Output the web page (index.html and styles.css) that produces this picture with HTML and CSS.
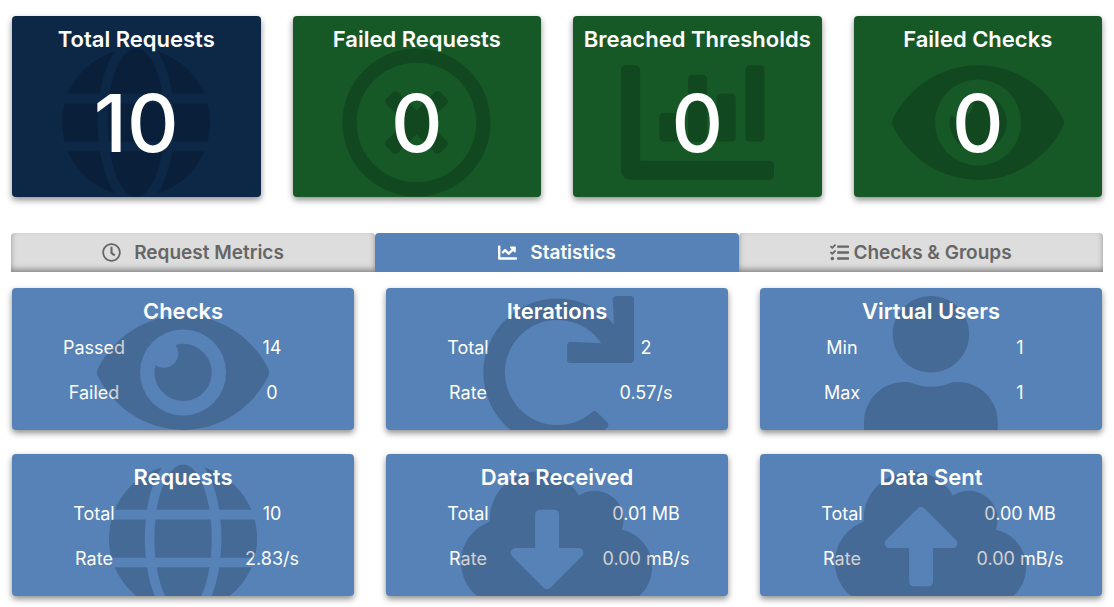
FILE: index.html
```html
<!DOCTYPE html>
<html lang="en">
<head>
<meta charset="utf-8">
<meta name="viewport" content="width=device-width, initial-scale=1">
<title>Load Test Report</title>
<link rel="stylesheet" href="styles.css">
</head>
<body>
<svg class="sprite" aria-hidden="true">
  <symbol id="globe" viewBox="0 0 496 512"><path d="M336.5 160C322 70.7 287.8 8 248 8s-74 62.7-88.5 152h177zM152 256c0 22.2 1.2 43.5 3.3 64h185.3c2.1-20.5 3.3-41.8 3.3-64s-1.2-43.5-3.3-64H155.3c-2.1 20.5-3.3 41.8-3.3 64zm324.7-96c-28.6-67.9-86.5-120.4-158-141.6 24.4 33.8 41.2 84.7 50 141.6h108zM177.2 18.4C105.8 39.6 47.8 92.1 19.3 160h108c8.7-56.9 25.5-107.8 49.9-141.6zM487.4 192H372.7c2.1 21 3.3 42.5 3.3 64s-1.2 43-3.3 64h114.6c5.5-20.5 8.6-41.8 8.6-64s-3.1-43.5-8.5-64zM120 256c0-21.5 1.2-43 3.3-64H8.6C3.2 212.5 0 233.8 0 256s3.2 43.5 8.6 64h114.6c-2-21-3.2-42.5-3.2-64zm39.5 96c14.5 89.3 48.7 152 88.5 152s74-62.7 88.5-152h-177zm159.3 141.6c71.4-21.2 129.4-73.7 158-141.6h-108c-8.8 56.9-25.6 107.8-50 141.6zM19.3 352c28.6 67.9 86.5 120.4 158 141.6-24.4-33.8-41.2-84.7-50-141.6h-108z"/></symbol>
  <symbol id="times-circle" viewBox="0 0 512 512"><path d="M256 8C119 8 8 119 8 256s111 248 248 248 248-111 248-248S393 8 256 8zm0 448c-110.5 0-200-89.5-200-200S145.5 56 256 56s200 89.5 200 200-89.5 200-200 200zm101.8-262.2L295.6 256l62.2 62.2c4.7 4.7 4.7 12.3 0 17l-22.6 22.6c-4.7 4.7-12.3 4.7-17 0L256 295.6l-62.2 62.2c-4.7 4.7-12.3 4.7-17 0l-22.6-22.6c-4.7-4.7-4.7-12.3 0-17l62.2-62.2-62.2-62.2c-4.7-4.7-4.7-12.3 0-17l22.6-22.6c4.7-4.7 12.3-4.7 17 0l62.2 62.2 62.2-62.2c4.7-4.7 12.3-4.7 17 0l22.6 22.6c4.7 4.7 4.7 12.3 0 17z"/></symbol>
  <symbol id="chart-bar" viewBox="0 0 512 512"><path d="M332.8 320h38.4c6.4 0 12.8-6.4 12.8-12.8V172.8c0-6.4-6.4-12.8-12.8-12.8h-38.4c-6.4 0-12.8 6.4-12.8 12.8v134.4c0 6.4 6.4 12.8 12.8 12.8zm96 0h38.4c6.4 0 12.8-6.4 12.8-12.8V76.8c0-6.4-6.4-12.8-12.8-12.8h-38.4c-6.4 0-12.8 6.4-12.8 12.8v230.4c0 6.4 6.4 12.8 12.8 12.8zm-288 0h38.4c6.4 0 12.8-6.4 12.8-12.8v-70.4c0-6.4-6.4-12.8-12.8-12.8h-38.4c-6.4 0-12.8 6.4-12.8 12.8v70.4c0 6.4 6.4 12.8 12.8 12.8zm96 0h38.4c6.4 0 12.8-6.4 12.8-12.8V108.8c0-6.4-6.4-12.8-12.8-12.8h-38.4c-6.4 0-12.8 6.4-12.8 12.8v198.4c0 6.4 6.4 12.8 12.8 12.8zM496 384H64V80c0-8.84-7.16-16-16-16H16C7.16 64 0 71.16 0 80v336c0 17.67 14.33 32 32 32h464c8.84 0 16-7.16 16-16v-32c0-8.84-7.16-16-16-16z"/></symbol>
  <symbol id="eye" viewBox="0 0 576 512"><path d="M572.52 241.4C518.29 135.59 410.93 64 288 64S57.68 135.64 3.48 241.41a32.35 32.35 0 0 0 0 29.19C57.71 376.41 165.07 448 288 448s230.32-71.64 284.52-177.41a32.35 32.35 0 0 0 0-29.19zM288 400a144 144 0 1 1 144-144 143.93 143.93 0 0 1-144 144zm0-240a95.31 95.31 0 0 0-25.31 3.79 47.85 47.85 0 0 1-66.9 66.9A95.78 95.78 0 1 0 288 160z"/></symbol>
  <symbol id="redo" viewBox="0 0 512 512"><path d="M500.33 0h-47.41a12 12 0 0 0-12 12.57l4 82.76A247.42 247.42 0 0 0 256 8C119.34 8 7.9 119.53 8 256.19 8.1 393.07 119.1 504 256 504a247.1 247.1 0 0 0 166.18-63.91 12 12 0 0 0 .48-17.43l-34-34a12 12 0 0 0-16.38-.55A176 176 0 1 1 402.1 157.8l-101.53-4.87a12 12 0 0 0-12.57 12v47.41a12 12 0 0 0 12 12h200.33a12 12 0 0 0 12-12V12a12 12 0 0 0-12-12z"/></symbol>
  <symbol id="user" viewBox="0 0 448 512"><path d="M224 256c70.7 0 128-57.3 128-128S294.7 0 224 0 96 57.3 96 128s57.3 128 128 128zm89.6 32h-16.7c-22.2 10.2-46.9 16-72.9 16s-50.6-5.8-72.9-16h-16.7C60.2 288 0 348.2 0 422.4V464c0 26.5 21.5 48 48 48h352c26.5 0 48-21.5 48-48v-41.6c0-74.2-60.2-134.4-134.4-134.4z"/></symbol>
  <symbol id="cloud-download" viewBox="0 0 640 512"><path d="M537.6 226.6c4.1-10.7 6.4-22.4 6.4-34.6 0-53-43-96-96-96-19.7 0-38.1 6-53.3 16.2C367 64.2 315.3 32 256 32c-88.4 0-160 71.6-160 160 0 2.7.1 5.4.2 8.1C40.2 219.8 0 273.2 0 336c0 79.5 64.5 144 144 144h368c70.7 0 128-57.3 128-128 0-61.9-44-113.6-102.4-125.4zm-132.9 88.7L299.3 420.7c-6.2 6.2-16.4 6.2-22.6 0L171.3 315.3c-10.1-10.1-2.9-27.3 11.3-27.3H248V176c0-8.8 7.2-16 16-16h48c8.8 0 16 7.2 16 16v112h65.4c14.2 0 21.4 17.2 11.3 27.3z"/></symbol>
  <symbol id="cloud-upload" viewBox="0 0 640 512"><path d="M537.6 226.6c4.1-10.7 6.4-22.4 6.4-34.6 0-53-43-96-96-96-19.7 0-38.1 6-53.3 16.2C367 64.2 315.3 32 256 32c-88.4 0-160 71.6-160 160 0 2.7.1 5.4.2 8.1C40.2 219.8 0 273.2 0 336c0 79.5 64.5 144 144 144h368c70.7 0 128-57.3 128-128 0-61.9-44-113.6-102.4-125.4zM393.4 288H328v112c0 8.8-7.2 16-16 16h-48c-8.8 0-16-7.2-16-16V288h-65.4c-14.3 0-21.4-17.2-11.3-27.3l105.4-105.4c6.2-6.2 16.4-6.2 22.6 0l105.4 105.4c10.1 10.1 2.9 27.3-11.3 27.3z"/></symbol>
  <symbol id="clock" viewBox="0 0 512 512"><path d="M256 8C119 8 8 119 8 256s111 248 248 248 248-111 248-248S393 8 256 8zm0 448c-110.5 0-200-89.5-200-200S145.5 56 256 56s200 89.5 200 200-89.5 200-200 200zm61.8-104.4l-84.9-61.7c-3.1-2.3-4.9-5.9-4.9-9.7V116c0-6.6 5.4-12 12-12h32c6.6 0 12 5.4 12 12v141.7l66.8 48.6c5.4 3.9 6.5 11.4 2.6 16.8L334.6 349c-3.9 5.3-11.4 6.5-16.8 2.6z"/></symbol>
  <symbol id="chart-line" viewBox="0 0 512 512"><path d="M496 384H64V80c0-8.84-7.16-16-16-16H16C7.16 64 0 71.16 0 80v336c0 17.67 14.33 32 32 32h464c8.84 0 16-7.16 16-16v-32c0-8.84-7.16-16-16-16zM464 96H345.94c-21.38 0-32.09 25.85-16.97 40.97l32.4 32.4L288 242.75l-73.37-73.37c-12.5-12.5-32.76-12.5-45.25 0l-68.69 68.69c-6.25 6.25-6.25 16.38 0 22.63l22.62 22.62c6.25 6.25 16.38 6.25 22.63 0L192 237.25l73.37 73.37c12.5 12.5 32.76 12.5 45.25 0l96-96 32.4 32.4c15.12 15.12 40.97 4.41 40.97-16.97V112c.01-8.84-7.15-16-15.99-16z"/></symbol>
  <symbol id="tasks" viewBox="0 0 512 512"><path d="M139.61 35.5a12 12 0 0 0-17 0L58.93 98.81l-22.7-22.12a12 12 0 0 0-17 0L3.53 92.41a12 12 0 0 0 0 17l47.59 47.4a12.78 12.78 0 0 0 17.61 0l15.59-15.62L156.52 69a12.09 12.09 0 0 0 .09-17zm0 159.19a12 12 0 0 0-17 0l-63.68 63.72-22.7-22.1a12 12 0 0 0-17 0L3.53 252a12 12 0 0 0 0 17L51 316.5a12.77 12.77 0 0 0 17.6 0l15.7-15.69 72.2-72.22a12 12 0 0 0 .09-16.9zM64 368c-26.49 0-48.59 21.5-48.59 48S37.53 464 64 464a48 48 0 0 0 0-96zm432 16H208a16 16 0 0 0-16 16v32a16 16 0 0 0 16 16h288a16 16 0 0 0 16-16v-32a16 16 0 0 0-16-16zm0-320H208a16 16 0 0 0-16 16v32a16 16 0 0 0 16 16h288a16 16 0 0 0 16-16V80a16 16 0 0 0-16-16zm0 160H208a16 16 0 0 0-16 16v32a16 16 0 0 0 16 16h288a16 16 0 0 0 16-16v-32a16 16 0 0 0-16-16z"/></symbol>
</svg>

<main class="report">
  <section class="summary" aria-label="Summary">
    <article class="card card-total">
      <div class="card-art"><svg class="art" viewBox="0 0 496 512" aria-hidden="true"><use href="#globe"/></svg></div>
      <h2 class="card-title">Total Requests</h2>
      <p class="card-number">10</p>
    </article>
    <article class="card card-good">
      <div class="card-art"><svg class="art" viewBox="0 0 512 512" aria-hidden="true"><use href="#times-circle"/></svg></div>
      <h2 class="card-title">Failed Requests</h2>
      <p class="card-number">0</p>
    </article>
    <article class="card card-good">
      <div class="card-art"><svg class="art" viewBox="0 0 512 512" aria-hidden="true"><use href="#chart-bar"/></svg></div>
      <h2 class="card-title">Breached Thresholds</h2>
      <p class="card-number">0</p>
    </article>
    <article class="card card-good">
      <div class="card-art"><svg class="art" viewBox="0 0 576 512" aria-hidden="true"><use href="#eye"/></svg></div>
      <h2 class="card-title">Failed Checks</h2>
      <p class="card-number">0</p>
    </article>
  </section>

  <div class="tabs" role="tablist">
    <button class="tab" type="button" role="tab" aria-selected="false"><svg class="tab-icon" viewBox="0 0 512 512" aria-hidden="true"><use href="#clock"/></svg>Request Metrics</button>
    <button class="tab tab-active" type="button" role="tab" aria-selected="true" aria-controls="statistics"><svg class="tab-icon" viewBox="0 0 512 512" aria-hidden="true"><use href="#chart-line"/></svg>Statistics</button>
    <button class="tab tab-tight" type="button" role="tab" aria-selected="false"><svg class="tab-icon" viewBox="0 0 512 512" aria-hidden="true"><use href="#tasks"/></svg>Checks &amp; Groups</button>
  </div>

  <section class="stats" id="statistics" role="tabpanel" aria-label="Statistics">
    <article class="card card-stat">
      <div class="card-art"><svg class="art" viewBox="0 0 576 512" aria-hidden="true"><use href="#eye"/></svg></div>
      <h2 class="card-title">Checks</h2>
      <table class="figures">
        <tr><th scope="row">Passed</th><td>14</td></tr>
        <tr><th scope="row">Failed</th><td>0</td></tr>
      </table>
    </article>
    <article class="card card-stat">
      <div class="card-art"><svg class="art" viewBox="0 0 512 512" aria-hidden="true"><use href="#redo"/></svg></div>
      <h2 class="card-title">Iterations</h2>
      <table class="figures">
        <tr><th scope="row">Total</th><td>2</td></tr>
        <tr><th scope="row">Rate</th><td>0.57/s</td></tr>
      </table>
    </article>
    <article class="card card-stat">
      <div class="card-art"><svg class="art" viewBox="0 0 448 512" aria-hidden="true"><use href="#user"/></svg></div>
      <h2 class="card-title">Virtual Users</h2>
      <table class="figures">
        <tr><th scope="row">Min</th><td>1</td></tr>
        <tr><th scope="row">Max</th><td>1</td></tr>
      </table>
    </article>
    <article class="card card-stat">
      <div class="card-art"><svg class="art" viewBox="0 0 496 512" aria-hidden="true"><use href="#globe"/></svg></div>
      <h2 class="card-title">Requests</h2>
      <table class="figures">
        <tr><th scope="row">Total</th><td>10</td></tr>
        <tr><th scope="row">Rate</th><td>2.83/s</td></tr>
      </table>
    </article>
    <article class="card card-stat">
      <div class="card-art"><svg class="art" viewBox="0 0 640 512" aria-hidden="true"><use href="#cloud-download"/></svg></div>
      <h2 class="card-title">Data Received</h2>
      <table class="figures">
        <tr><th scope="row">Total</th><td>0.01 MB</td></tr>
        <tr><th scope="row">Rate</th><td>0.00 mB/s</td></tr>
      </table>
    </article>
    <article class="card card-stat">
      <div class="card-art"><svg class="art" viewBox="0 0 640 512" aria-hidden="true"><use href="#cloud-upload"/></svg></div>
      <h2 class="card-title">Data Sent</h2>
      <table class="figures">
        <tr><th scope="row">Total</th><td>0.00 MB</td></tr>
        <tr><th scope="row">Rate</th><td>0.00 mB/s</td></tr>
      </table>
    </article>
  </section>
</main>
</body>
</html>
```
FILE: styles.css
```css
* {
  box-sizing: border-box;
}

body {
  margin: 0;
  min-height: 100vh;
  background: #fff;
  font-family: Inter, "Liberation Sans", sans-serif;
}

.sprite {
  display: none;
}

.report {
  padding: 16px 12px 11px;
}

.summary {
  display: grid;
  grid-template-columns: repeat(4, 1fr);
  gap: 32px;
  margin-bottom: 36px;
}

.stats {
  display: grid;
  grid-template-columns: repeat(3, 1fr);
  gap: 24px 32px;
}

.card {
  position: relative;
  overflow: hidden;
  padding: 9px 0 26px;
  border-radius: 4px;
  box-shadow: 0 3px 6px rgba(0, 0, 0, 0.45);
  color: #fff;
  text-align: center;
}

.card-total {
  background: #0d2747;
}

.card-good {
  background: #175827;
}

.card-stat {
  padding-bottom: 15px;
  background: #5682b8;
}

/* Watermark: tints the figures, stays under the title and number */
.card-art {
  position: absolute;
  inset: 30px 0 auto;
  z-index: 1;
  display: flex;
  justify-content: center;
  pointer-events: none;
}

.card-stat .card-art {
  top: 8px;
}

.art {
  flex: none;
  height: 153px;
  fill: rgba(0, 0, 0, 0.18);
}

.card-title {
  position: relative;
  z-index: 2;
  margin: 0;
  font-size: 22px;
  font-weight: 600;
  line-height: 28px;
}

.card-number {
  position: relative;
  z-index: 2;
  margin: 22px 0 0;
  font-size: 80px;
  font-weight: 500;
  line-height: 96px;
}

.figures {
  width: calc(100% + 14px);
  margin: 0 -7px;
  border-collapse: collapse;
  table-layout: fixed;
  font-size: 18px;
  line-height: 45px;
}

.figures th,
.figures td {
  padding: 0;
  font-weight: 400;
  text-align: center;
}

.tabs {
  display: flex;
  margin: 0 -1px 16px;
}

.tab {
  display: flex;
  flex: 1;
  align-items: center;
  justify-content: center;
  gap: 13px;
  height: 39px;
  padding: 0;
  border: 0;
  border-radius: 4px 4px 0 0;
  background: #ddd;
  box-shadow: inset 0 -3px 6px -1px rgba(0, 0, 0, 0.45);
  color: #666;
  font: 600 19px/24px Inter, "Liberation Sans", sans-serif;
  cursor: pointer;
}

.tab-active {
  background: #5682b8;
  box-shadow: none;
  color: #fff;
}

.tab-tight {
  gap: 4px;
}

.tab-icon {
  flex: none;
  width: 19px;
  height: 19px;
  fill: currentColor;
}
```
